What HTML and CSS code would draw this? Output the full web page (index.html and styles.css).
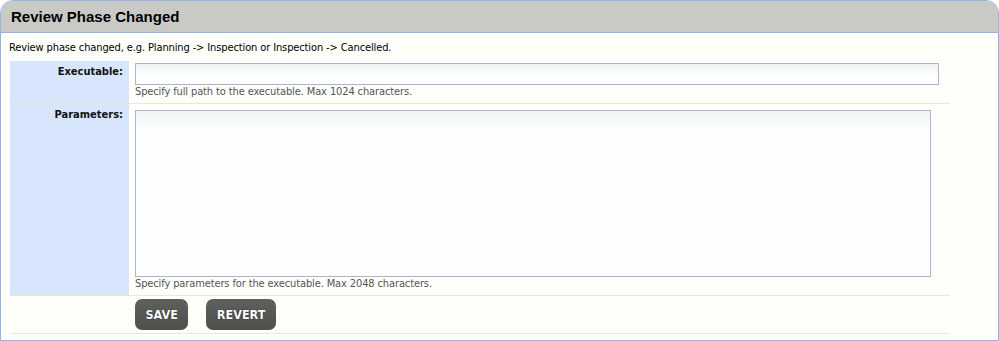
FILE: index.html
```html
<!DOCTYPE html>
<html>
<head>
  <meta charset="utf-8">
  <link rel="stylesheet" href="styles.css">
</head>
<body>
  <div class="panel">
    <div class="panel-head">
      <div class="panel-title">Review Phase Changed</div>
    </div>

    <div class="desc">Review phase changed, e.g. Planning -&gt; Inspection or Inspection -&gt; Cancelled.</div>

    <div class="form">
      <div class="form-row">
        <div class="form-label">Executable:</div>
        <div class="form-field">
          <input type="text" class="text-input">
          <div class="hint">Specify full path to the executable. Max 1024 characters.</div>
        </div>
      </div>

      <div class="form-row">
        <div class="form-label">Parameters:</div>
        <div class="form-field">
          <textarea class="text-area"></textarea>
          <div class="hint">Specify parameters for the executable. Max 2048 characters.</div>
        </div>
      </div>

      <div class="form-row buttons-row">
        <div class="form-label empty"></div>
        <div class="form-field buttons">
          <button class="btn">SAVE</button>
          <button class="btn">REVERT</button>
        </div>
      </div>
    </div>
  </div>
</body>
</html>
```

FILE: styles.css
```css
* {
  margin: 0;
  padding: 0;
  box-sizing: border-box;
}

body {
  background: #ffffff;
  font-family: "DejaVu Sans Condensed", "DejaVu Sans", sans-serif;
  font-size: 11px;
  color: #000;
}

.panel {
  width: 999px;
  height: 341px;
  border: 1px solid #93b2f4;
  border-radius: 13px 13px 0 0;
  background: #fefefb;
  overflow: hidden;
}

.panel-head {
  height: 32px;
  background: #c9cac6;
  border-bottom: 1px solid #93b2f4;
  padding: 7px 0 0 10px;
}

.panel-title {
  font-family: "Liberation Sans", Arial, sans-serif;
  font-size: 15px;
  font-weight: bold;
  color: #000;
}

.desc {
  padding: 8px 0 0 8px;
  height: 28px;
  line-height: 13px;
  letter-spacing: -0.12px;
}

.form {
  width: 940px;
  margin-left: 9px;
}

.form-row {
  display: flex;
  border-bottom: 1px solid #e8e9d9;
}

.form-label {
  width: 119px;
  flex-shrink: 0;
  background: #d7e6fc;
  text-align: right;
  font-weight: bold;
  padding: 4px 6px 0 0;
  color: #111;
}

.form-label.empty {
  background: transparent;
}

.form-field {
  flex: 1;
  padding: 2px 0 5px 6px;
}

.text-input {
  display: block;
  width: 804px;
  height: 22px;
  border: 1px solid #b2b3ca;
  background: linear-gradient(#eef3f3, #fdfefe 60%);
  font-family: inherit;
  font-size: 11px;
}

.text-area {
  display: block;
  width: 796px;
  height: 167px;
  margin-top: 4px;
  border: 1px solid #b2b3ca;
  background: linear-gradient(#eef3f3, #fdfefe 12%);
  resize: none;
  font-family: inherit;
}

.hint {
  color: #555;
  line-height: 13px;
  letter-spacing: -0.12px;
}

.buttons {
  display: flex;
  gap: 18px;
  padding: 3px 0 3px 6px;
}

.btn {
  height: 31px;
  padding: 0 10.5px;
  border: none;
  border-radius: 7px;
  background: linear-gradient(#5e605e, #4e504e);
  color: #fff;
  font-family: "DejaVu Sans Condensed", "DejaVu Sans", sans-serif;
  font-size: 12.5px;
  font-weight: bold;
  text-shadow: 0 0 1px #000;
  cursor: pointer;
}
```
